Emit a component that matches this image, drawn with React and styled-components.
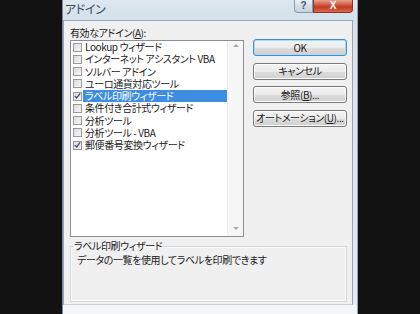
import React from 'react';
import styled, { createGlobalStyle } from 'styled-components';

const GlobalStyle = createGlobalStyle`
  html, body {
    margin: 0;
    padding: 0;
    background: #121212;
  }
  body {
    font-family: "Noto Sans CJK JP", "Liberation Sans", sans-serif;
    font-feature-settings: "palt";
    letter-spacing: -0.4px;
  }
`;

const Screen = styled.div`
  width: 420px;
  height: 314px;
  overflow: hidden;
  background: #121212;
  display: flex;
  padding-left: 62px;
  box-sizing: border-box;
`;

const Window = styled.div`
  width: 296px;
  height: 314px;
  display: flex;
  flex-direction: column;
  background: linear-gradient(180deg, #dfe8f0 0%, #d6e2ec 12px, #e4ecf3 100%);
  border-left: 1px solid #7d8b98;
  border-right: 1px solid #8fa4b8;
  box-sizing: border-box;
`;

const TitleBar = styled.div`
  height: 20px;
  display: flex;
  align-items: flex-start;
  flex-shrink: 0;
`;

const Title = styled.span`
  margin-top: 1px;
  padding-left: 2px;
  font-size: 12px;
  line-height: 16px;
  color: #3b4a5a;
`;

const Caption = styled.div`
  margin-left: auto;
  margin-right: 4px;
  display: flex;
`;

const CaptionButton = styled.div`
  height: 13px;
  width: ${(p) => p.$w}px;
  display: flex;
  align-items: center;
  justify-content: center;
  box-sizing: border-box;
  border: 1px solid ${(p) => (p.$close ? '#8a3128' : '#8c9cae')};
  border-top: none;
  border-radius: ${(p) => (p.$close ? '0 0 4px 0' : '0 0 0 4px')};
  background: ${(p) =>
    p.$close
      ? 'linear-gradient(180deg, #e6a18f 0%, #d0503c 45%, #c23a26 60%, #dc6a4c 100%)'
      : 'linear-gradient(180deg, #edf2f7 0%, #d4dee8 50%, #c6d3df 100%)'};
  color: ${(p) => (p.$close ? '#ffffff' : '#44556a')};
  font-family: "Liberation Sans", sans-serif;
  font-weight: bold;
  font-size: 10px;
  line-height: 12px;
  letter-spacing: 0;
`;

const Client = styled.div`
  flex: 1;
  margin: 0 4px 0 0;
  background: #f0f0f0;
  border: 1px solid #98a6b4;
  border-bottom-color: #c8d2dc;
  padding: 5px 5px 2px 6px;
  display: flex;
  flex-direction: column;
  box-sizing: border-box;
`;

const FrameBottom = styled.div`
  height: 9px;
  flex-shrink: 0;
  background: #f4f6f8;
`;

const TopArea = styled.div`
  display: flex;
  gap: 9px;
`;

const ListColumn = styled.div`
  width: 174px;
  display: flex;
  flex-direction: column;
`;

const Label = styled.div`
  font-size: 10px;
  line-height: 13px;
  height: 14px;
  color: #1a1a1a;
  white-space: nowrap;
`;

const Key = styled.span`
  text-decoration: underline;
`;

const ListBox = styled.div`
  height: 197px;
  display: flex;
  background: #ffffff;
  border: 1px solid #8c9096;
  box-sizing: border-box;
`;

const Items = styled.div`
  flex: 1;
  min-width: 0;
`;

const Item = styled.div`
  height: 12.25px;
  display: flex;
  align-items: center;
  padding-left: 2px;
`;

const Box = styled.span`
  width: 9px;
  height: 9px;
  box-sizing: border-box;
  border: 1px solid #9a9a9a;
  background: linear-gradient(135deg, #dcdcdc 0%, #f6f6f6 100%);
  flex-shrink: 0;
  display: flex;
  align-items: center;
  justify-content: center;
`;

const ItemText = styled.span`
  flex: 1;
  margin-left: 1px;
  padding-left: 2px;
  font-size: 10px;
  line-height: 12px;
  white-space: nowrap;
  color: ${(p) => (p.$selected ? '#ffffff' : '#1a1a1a')};
  background: ${(p) => (p.$selected ? '#3d8ee0' : 'transparent')};
`;

const ScrollBar = styled.div`
  width: 15px;
  border-left: 1px solid #ececec;
  background: #f7f7f7;
  display: flex;
  flex-direction: column;
  justify-content: space-between;
  align-items: center;
  padding: 3px 0 6px;
`;

const Arrow = styled.div`
  width: 0;
  height: 0;
  border-left: 3px solid transparent;
  border-right: 3px solid transparent;
  ${(p) =>
    p.$down
      ? 'border-top: 3px solid #a8a8a8;'
      : 'border-bottom: 3px solid #a8a8a8;'}
`;

const ButtonColumn = styled.div`
  width: 94px;
  padding-top: 13px;
  display: flex;
  flex-direction: column;
  gap: 6.5px;
`;

const Button = styled.div`
  height: 17px;
  box-sizing: border-box;
  border: 1px solid ${(p) => (p.$default ? '#3c8fcf' : '#7a7a7a')};
  box-shadow: ${(p) => (p.$default ? 'inset 0 0 0 1px #a8dcf4' : 'inset 0 0 0 1px #fbfbfb')};
  border-radius: 3px;
  background: linear-gradient(180deg, #f4f4f4 0%, #ebebeb 50%, #dcdcdc 52%, #d0d0d0 100%);
  display: flex;
  align-items: center;
  justify-content: center;
  font-size: 10px;
  line-height: 12px;
  white-space: nowrap;
  color: #1a1a1a;
`;

const Group = styled.fieldset`
  margin: 3px 0 0 0;
  flex: 1;
  border: 1px solid #d2d9df;
  box-shadow: inset 0 0 0 1px #fafafa;
  padding: 2px 6px 0;
  min-width: 0;
`;

const Legend = styled.legend`
  padding: 0;
  margin-left: -3px;
  font-size: 10px;
  line-height: 12px;
  color: #1a1a1a;
`;

const Description = styled.div`
  font-size: 10px;
  line-height: 12px;
  color: #1a1a1a;
`;

const Check = () => (
  <svg width="8" height="8" viewBox="0 0 8 8">
    <path d="M1 4.2 L3 6.3 L7 1" fill="none" stroke="#2c4a6e" strokeWidth="1.4" />
  </svg>
);

const addins = [
  { name: 'Lookup ウィザード' },
  { name: 'インターネット アシスタント VBA' },
  { name: 'ソルバー アドイン' },
  { name: 'ユーロ通貨対応ツール' },
  { name: 'ラベル印刷ウィザード', checked: true, selected: true },
  { name: '条件付き合計式ウィザード' },
  { name: '分析ツール' },
  { name: '分析ツール - VBA' },
  { name: '郵便番号変換ウィザード', checked: true },
];

const App = () => (
  <>
    <GlobalStyle />
    <Screen>
      <Window>
        <TitleBar>
          <Title>アドイン</Title>
          <Caption>
            <CaptionButton $w={19}>?</CaptionButton>
            <CaptionButton $w={40} $close>
              X
            </CaptionButton>
          </Caption>
        </TitleBar>
        <Client>
          <TopArea>
            <ListColumn>
              <Label>
                有効なアドイン(<Key>A</Key>):
              </Label>
              <ListBox>
                <Items>
                  {addins.map((a) => (
                    <Item key={a.name}>
                      <Box>{a.checked && <Check />}</Box>
                      <ItemText $selected={a.selected}>{a.name}</ItemText>
                    </Item>
                  ))}
                </Items>
                <ScrollBar>
                  <Arrow />
                  <Arrow $down />
                </ScrollBar>
              </ListBox>
            </ListColumn>
            <ButtonColumn>
              <Button $default>OK</Button>
              <Button>キャンセル</Button>
              <Button>
                参照(<Key>B</Key>)...
              </Button>
              <Button>
                オートメーション(<Key>U</Key>)...
              </Button>
            </ButtonColumn>
          </TopArea>
          <Group>
            <Legend>ラベル印刷ウィザード</Legend>
            <Description>データの一覧を使用してラベルを印刷できます</Description>
          </Group>
        </Client>
        <FrameBottom />
      </Window>
    </Screen>
  </>
);

export default App;
